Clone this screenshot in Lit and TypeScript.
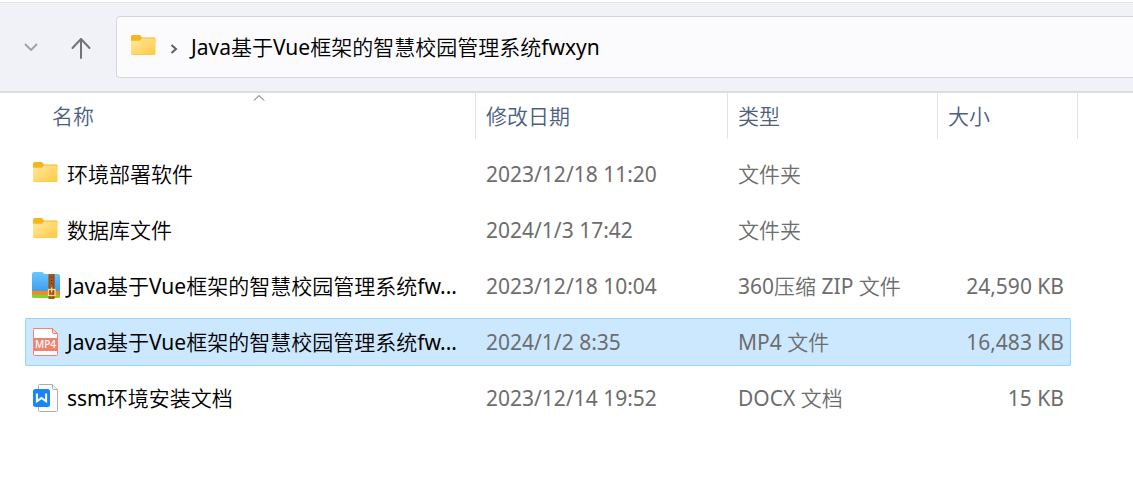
import { LitElement, html, css, svg, nothing } from "lit";
import { customElement, state } from "lit/decorators.js";

type Kind = "folder" | "zip" | "mp4" | "docx";

interface Entry {
  name: string;
  date: string;
  type: string;
  size: string;
  kind: Kind;
}

const ENTRIES: Entry[] = [
  { name: "环境部署软件", date: "2023/12/18 11:20", type: "文件夹", size: "", kind: "folder" },
  { name: "数据库文件", date: "2024/1/3 17:42", type: "文件夹", size: "", kind: "folder" },
  { name: "Java基于Vue框架的智慧校园管理系统fw...", date: "2023/12/18 10:04", type: "360压缩 ZIP 文件", size: "24,590 KB", kind: "zip" },
  { name: "Java基于Vue框架的智慧校园管理系统fw...", date: "2024/1/2 8:35", type: "MP4 文件", size: "16,483 KB", kind: "mp4" },
  { name: "ssm环境安装文档", date: "2023/12/14 19:52", type: "DOCX 文档", size: "15 KB", kind: "docx" },
];

const COLUMNS = ["名称", "修改日期", "类型", "大小"];

const glyphs: Record<Kind, unknown> = {
  folder: svg`
    <defs>
      <linearGradient id="f" x1="0" y1="0" x2="1" y2="1">
        <stop offset="0" stop-color="#ffe9a4"/><stop offset="1" stop-color="#ffc93c"/>
      </linearGradient>
    </defs>
    <path d="M1 3.500A1.500 1.500 0 0 1 2.500 2H10L12 4.500H24.500A1 1 0 0 1 25.500 5.500V9H1Z" fill="#f9b51c"/>
    <path d="M1 7.700H10L12 5.500H25.500V20.500A1.500 1.500 0 0 1 24 22H2.500A1.500 1.500 0 0 1 1 20.500Z" fill="url(#f)"/>
    <path d="M2 21.500H24.500" stroke="#f8cb55" stroke-width="1"/>`,
  zip: svg`
    <defs>
      <linearGradient id="z" x1="0" y1="0" x2="0" y2="1">
        <stop offset="0" stop-color="#6cc6fb"/><stop offset="1" stop-color="#3d9df0"/>
      </linearGradient>
      <linearGradient id="s" x1="0" y1="0" x2="1" y2="0">
        <stop offset="0" stop-color="#93430b"/><stop offset=".5" stop-color="#b4601d"/><stop offset="1" stop-color="#8a3c09"/>
      </linearGradient>
    </defs>
    <path d="M0 18H28V24.500A1.500 1.500 0 0 1 26.500 26H1.500A1.500 1.500 0 0 1 0 24.500Z" fill="#86cf35"/>
    <path d="M0 17H28V22.500H1.500A1.500 1.500 0 0 1 0 21Z" fill="#ff8417"/>
    <path d="M0 2A2 2 0 0 1 2 0H9.500Q11 0 11.700 1.200L12.500 2H26A2 2 0 0 1 28 4V19H2A2 2 0 0 1 0 17Z" fill="url(#z)"/>
    <rect x="16.500" y="2" width="6" height="25" rx=".7" fill="url(#s)"/>
    <path d="M19.500 4.500V14" stroke="#5d2806" stroke-width="1.200" stroke-dasharray="1.200 2"/>
    <rect x="16.500" y="17.500" width="6.500" height="6" fill="none" stroke="#ffd98e" stroke-width="1.300"/>
    <path d="M19.700 15.500V20.500" stroke="#ffd98e" stroke-width="1.300"/>`,
  mp4: svg`
    <path d="M1.500 .5H20.500L25.500 5.500V26.500A1 1 0 0 1 24.500 27.500H2.500A1 1 0 0 1 1.500 26.500V1.500Z" fill="#fff" stroke="#f0836f"/>
    <path d="M20.500 .5V4.500A1 1 0 0 0 21.500 5.500H25.500Z" fill="#fbd3ca" stroke="#f0836f"/>
    <rect x="1" y="10" width="25" height="13" fill="#f0836f"/>
    <text x="13.500" y="20" text-anchor="middle" class="tag">MP4</text>`,
  docx: svg`
    <path d="M7.500 .5H20.500L25.500 5.500V26.500A1 1 0 0 1 24.500 27.500H7.500A1 1 0 0 1 6.500 26.500V1.500A1 1 0 0 1 7.500 .5Z" fill="#fcfcfd" stroke="#aaaebb"/>
    <path d="M20.500 .5V4.500A1 1 0 0 0 21.500 5.500H25.500" fill="#eceef2" stroke="#aaaebb"/>
    <rect x="1" y="5" width="17" height="18" rx="2.500" fill="#1785fb"/>
    <path d="M4.900 9.500V17.200L9.500 13.900L14.100 17.200V9.500" fill="none" stroke="#fff" stroke-width="2"/>`,
};

@customElement("file-icon")
class FileIcon extends LitElement {
  static properties = { kind: {} };
  declare kind: Kind;

  static styles = css`
    :host { display: block; flex: none; width: 28px; height: 28px; }
    svg { display: block; }
    .tag { font: 500 10px "Noto Sans", sans-serif; fill: #fff; }
  `;

  render() {
    return html`<svg width="28" height="28" viewBox="0 0 28 28" aria-hidden="true">${glyphs[this.kind]}</svg>`;
  }
}

@customElement("app-root")
class AppRoot extends LitElement {
  @state() private selected = 3;

  static styles = css`
    :host {
      display: block;
      min-height: 100vh;
      box-sizing: border-box;
      padding-top: 2px;
      background: #fff;
      color: #000;
      font: 400 21px/28px "Noto Sans", "Noto Sans CJK SC DemiLight", "Noto Sans CJK SC", sans-serif;
      overflow: hidden;
    }
    button { font: inherit; color: inherit; border: 0; padding: 0; background: none; }
    .toolbar {
      display: flex;
      align-items: center;
      padding: 13px 0 13px 20px;
      background: #f0f2f8;
      border-top: 1px solid #e4e5e9;
      border-bottom: 2px solid #dcdce2;
    }
    .nav { display: flex; gap: 28px; margin-right: 24px; }
    .nav button { display: grid; place-items: center; width: 22px; height: 28px; }
    .address {
      flex: 1;
      display: flex;
      align-items: center;
      height: 60px;
      padding-left: 13px;
      background: #fbfbfd;
      border: 1px solid #d6d7dc;
      border-right: 0;
      border-radius: 4px 0 0 4px;
    }
    .chevron { margin: 3px 12px 0 11px; }
    table { display: block; padding: 0 55px 0 25px; }
    thead, tbody { display: block; }
    tr { display: grid; }
    th, td { padding: 0; font-weight: 400; text-align: left; white-space: nowrap; }
    .head { grid-template-columns: 1fr 252px 210px 140px; }
    .head th { border-right: 1px solid #e3e3e6; }
    .head button {
      display: block;
      width: 100%;
      height: 46px;
      padding-left: 10px;
      text-align: left;
      color: #4c6080;
    }
    .head .first { position: relative; padding-left: 27px; }
    .sort { position: absolute; left: calc(50% + 2px); top: 1px; }
    tbody { display: grid; gap: 8px; padding-top: 11px; }
    .row {
      grid-template-columns: 1fr 252px 210px 133px;
      align-items: center;
      height: 48px;
      margin-right: 7px;
      border-radius: 2px;
      color: #6d6d6d;
    }
    .row.on { background: #cce8ff; box-shadow: inset 0 0 0 1px #99d1ff; }
    .row td { padding-left: 10px; }
    .row .name { display: flex; align-items: center; gap: 7px; padding-left: 7px; color: #000; }
    .row .size { padding: 0 7px 0 0; text-align: right; }
  `;

  render() {
    return html`
      <nav class="toolbar">
        <div class="nav">
          <button aria-label="最近浏览的位置">
            <svg width="14" height="10" viewBox="0 0 14 10" fill="none" stroke="#a0a1a5" stroke-width="1.800" stroke-linecap="round" stroke-linejoin="round"><path d="M1.500 2.500L7 8L12.500 2.500"/></svg>
          </button>
          <button aria-label="上移">
            <svg width="22" height="24" viewBox="0 0 22 24" fill="none" stroke="#737478" stroke-width="2" stroke-linecap="round" stroke-linejoin="round"><path d="M11 23V4M2.500 13L11 4L19.500 13"/></svg>
          </button>
        </div>
        <div class="address">
          <file-icon .kind=${"folder"}></file-icon>
          <svg class="chevron" width="10" height="12" viewBox="0 0 10 12" fill="none" stroke="#606165" stroke-width="2"><path d="M2.500 2L7 6L2.500 10"/></svg>
          <span>Java基于Vue框架的智慧校园管理系统fwxyn</span>
        </div>
      </nav>
      <table>
        <thead>
          <tr class="head">
            ${COLUMNS.map((c, i) => html`<th scope="col" aria-sort=${i === 0 ? "ascending" : "none"}>
              <button class=${i === 0 ? "first" : ""}>${c}${i === 0
                ? html`<svg class="sort" width="14" height="8" viewBox="0 0 14 8" fill="none" stroke="#5c5c5c"><path d="M2 6.500L7 1.500L12 6.500"/></svg>`
                : nothing}</button>
            </th>`)}
          </tr>
        </thead>
        <tbody>
          ${ENTRIES.map((e, i) => html`<tr
            class="row ${i === this.selected ? "on" : ""}"
            @click=${() => (this.selected = i)}
          >
            <td class="name"><file-icon .kind=${e.kind}></file-icon><span>${e.name}</span></td>
            <td>${e.date}</td>
            <td>${e.type}</td>
            <td class="size">${e.size}</td>
          </tr>`)}
        </tbody>
      </table>
    `;
  }
}
